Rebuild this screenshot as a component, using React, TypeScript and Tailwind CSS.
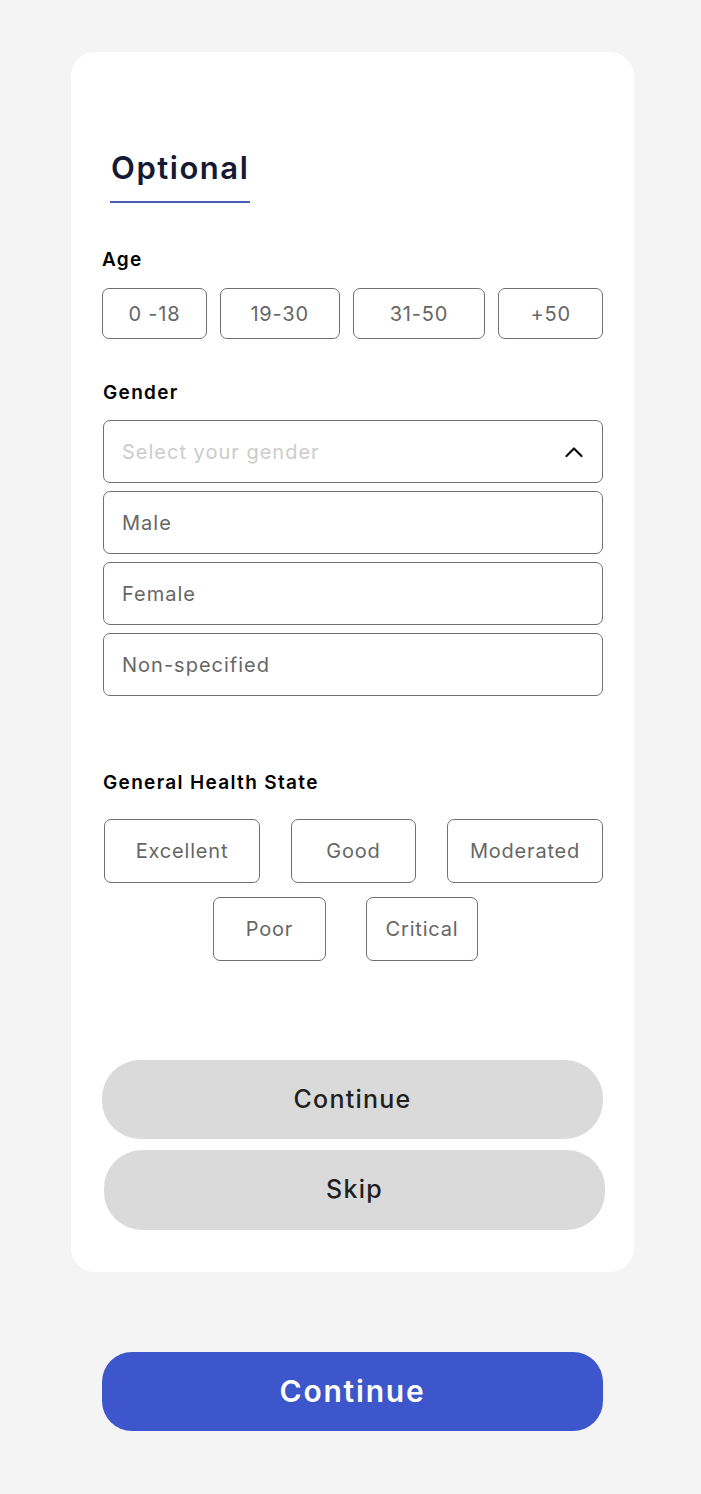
import React, { useState } from 'react';

const ages = ['0 -18', '19-30', '31-50', '+50'];
const ageWidths = ['w-[105px]', 'w-[120px]', 'w-[133px]', 'w-[105px]'];
const genders = ['Male', 'Female', 'Non-specified'];

const Chevron: React.FC = () => (
  <svg width="18" height="12" viewBox="0 0 18 12" fill="none">
    <path d="M1.5 10L9 2.5L16.5 10" stroke="#111" strokeWidth="2.2" strokeLinecap="round" strokeLinejoin="round" />
  </svg>
);

const HealthButton: React.FC<{ label: string; className: string }> = ({ label, className }) => (
  <button
    className={`h-[64px] rounded-[7px] border border-[#707070] text-[20px] tracking-[0.04em] text-[#666] ${className}`}
  >
    {label}
  </button>
);

const App: React.FC = () => {
  const [age, setAge] = useState<string | null>(null);

  return (
    <div className="min-h-[1494px] w-full bg-[#f4f4f4] pt-[52px] font-['Inter',sans-serif]">
      <div className="ml-[71px] h-[1220px] w-[563px] rounded-[24px] bg-white px-[31px] pt-[97px]">
        {/* tab header */}
        <div className="ml-[8px] inline-block border-b-2 border-[#4a5db9] px-[1px] pb-[14px]">
          <h1 className="text-[31px] font-semibold leading-[38px] tracking-[0.05em] text-[#141a33]">Optional</h1>
        </div>

        <p className="mt-[45px] text-[19px] font-semibold leading-[24px] tracking-[0.07em] text-black">Age</p>
        <div className="mt-[16px] flex gap-[13px]">
          {ages.map((a, i) => (
            <button
              key={a}
              onClick={() => setAge(a)}
              className={`h-[51px] ${ageWidths[i]} rounded-[7px] border text-[20px] tracking-[0.04em] text-[#666] ${
                age === a ? 'border-[#3d56cb]' : 'border-[#707070]'
              }`}
            >
              {a}
            </button>
          ))}
        </div>

        <p className="ml-[1px] mt-[42px] text-[19px] font-semibold leading-[24px] tracking-[0.07em] text-black">Gender</p>
        <div className="ml-[1px] mt-[15px] flex w-[500px] flex-col gap-[8px]">
          <div className="flex h-[63px] items-center justify-between rounded-[7px] border border-[#707070] pl-[18px] pr-[19px]">
            <span className="text-[20px] tracking-[0.05em] text-[#cccccc]">Select your gender</span>
            <Chevron />
          </div>
          {genders.map((g) => (
            <div
              key={g}
              className="flex h-[63px] items-center rounded-[7px] border border-[#707070] pl-[18px] text-[20px] tracking-[0.05em] text-[#666]"
            >
              {g}
            </div>
          ))}
        </div>

        <p className="ml-[1px] mt-[75px] text-[19px] font-semibold leading-[24px] tracking-[0.07em] text-black">
          General Health State
        </p>
        <div className="ml-[2px] mt-[24px] flex flex-col gap-[14px]">
          <div className="flex justify-between">
            <HealthButton label="Excellent" className="w-[156px]" />
            <HealthButton label="Good" className="w-[125px]" />
            <HealthButton label="Moderated" className="w-[156px]" />
          </div>
          <div className="ml-[109px] flex gap-[40px]">
            <HealthButton label="Poor" className="w-[113px]" />
            <HealthButton label="Critical" className="w-[112px]" />
          </div>
        </div>

        <button className="mt-[99px] block h-[79px] w-[501px] rounded-[38px] bg-[#dadada] text-[25px] font-medium tracking-[0.05em] text-[#1f1f1f]">
          Continue
        </button>
        <button className="ml-[2px] mt-[11px] block h-[80px] w-[501px] rounded-[38px] bg-[#dadada] text-[25px] font-medium tracking-[0.05em] text-[#1f1f1f]">
          Skip
        </button>
      </div>

      <div className="ml-[102px] mt-[80px] w-[501px]">
        <button className="h-[79px] w-full rounded-[30px] bg-[#3d56cb] text-[30px] font-semibold tracking-[0.06em] text-white">
          Continue
        </button>
      </div>
    </div>
  );
};

export default App;
